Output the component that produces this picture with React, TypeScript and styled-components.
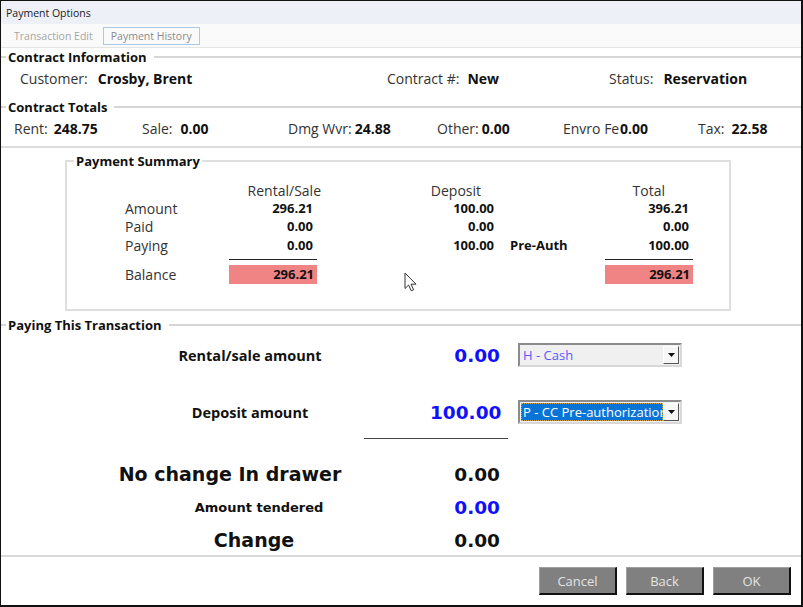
import React from 'react';
import styled, { createGlobalStyle } from 'styled-components';

const GlobalStyle = createGlobalStyle`
  html, body { margin: 0; padding: 0; background: #fff; }
  body { font-family: "Open Sans", "Noto Sans", sans-serif; color: #111; }
  * { box-sizing: border-box; }
`;

const Window = styled.div`
  width: 803px;
  height: 607px;
  border: 1px solid #111;
  border-right-width: 2px;
  border-bottom-width: 2px;
  display: flex;
  flex-direction: column;
  background: #fff;
  overflow: hidden;
`;

const TitleBar = styled.div`
  height: 23px;
  flex: none;
  background: #eef0f7;
  display: flex;
  align-items: center;
  padding-left: 5px;
  font-size: 10.5px;
  color: #222;
`;

const TabBar = styled.div`
  height: 24px;
  flex: none;
  background: #fafafa;
  border-bottom: 1px solid #e4e4e4;
  display: flex;
  align-items: center;
  gap: 2px;
  padding-left: 5px;
`;

const Tab = styled.div<{ $active?: boolean }>`
  height: 18px;
  padding: 0 7px;
  display: flex;
  align-items: center;
  font-size: 10.5px;
  color: ${(p) => (p.$active ? '#8a8a8a' : '#a5a5a5')};
  border: 1px solid ${(p) => (p.$active ? '#a9cbea' : 'transparent')};
`;

const SectionHeader = styled.div<{ $mt?: number }>`
  display: flex;
  align-items: center;
  height: 18px;
  flex: none;
  margin-top: ${(p) => p.$mt ?? 0}px;
  font-weight: 700;
  font-size: 13px;
  color: #111;
  &::before {
    content: '';
    width: 5px;
    height: 2px;
    background: #d6d6d6;
    margin-right: 2px;
  }
  &::after {
    content: '';
    flex: 1;
    height: 2px;
    background: #d6d6d6;
    margin-left: 7px;
  }
`;

const InfoRow = styled.div<{ $cols: string; $pl: number }>`
  display: grid;
  grid-template-columns: ${(p) => p.$cols};
  padding-left: ${(p) => p.$pl}px;
  height: 20px;
  margin-top: 2px;
  align-items: center;
  flex: none;
  font-size: 14px;
`;

const Pair = styled.div<{ $gap: number }>`
  display: flex;
  align-items: baseline;
  gap: ${(p) => p.$gap}px;
  white-space: nowrap;
`;

const Label = styled.span<{ $clip?: number }>`
  color: #333;
  ${(p) => (p.$clip ? `width: ${p.$clip}px; overflow: hidden; display: inline-block;` : '')}
`;

const Value = styled.span`
  font-weight: 700;
  color: #111;
`;

const Divider = styled.div`
  height: 2px;
  flex: none;
  background: #dcdcdc;
  margin-top: 8px;
`;

const GroupBox = styled.fieldset`
  margin: 5px 0 0 64px;
  width: 666px;
  padding: 0;
  min-width: 0;
  border: 2px solid #dfdfdf;
  flex: none;
`;

const GroupLegend = styled.legend`
  margin-left: 7px;
  padding: 0 2px;
  font-weight: 700;
  font-size: 13px;
  line-height: 16px;
  color: #111;
`;

const SummaryGrid = styled.div`
  position: relative;
  display: grid;
  grid-template-columns: 104px 88px 181px 107px 88px;
  grid-template-rows: 18px 18px 18.5px 19px 10px 19px;
  padding: 12px 0 25.5px 58px;
  align-items: center;
`;

const ColHead = styled.div<{ $mr: number }>`
  justify-self: end;
  margin-right: ${(p) => p.$mr}px;
  font-size: 14px;
  color: #333;
  white-space: nowrap;
`;

const RowLabel = styled.div`
  font-size: 14px;
  color: #333;
  line-height: 18px;
  padding-top: 1px;
`;

const Num = styled.div`
  text-align: right;
  padding-right: 4px;
  font-weight: 700;
  font-size: 13px;
  color: #111;
`;

const Note = styled.div`
  padding-left: 12px;
  font-weight: 700;
  font-size: 13px;
  color: #111;
`;

const Rule = styled.div`
  height: 1px;
  background: #222;
`;

const BalanceBox = styled.div`
  height: 19px;
  background: #f08383;
  text-align: right;
  padding-right: 3px;
  font-weight: 700;
  font-size: 13px;
  line-height: 19px;
  color: #111;
`;

const Cursor = styled.svg`
  position: absolute;
  left: 337px;
  top: 103px;
`;

const TxRow = styled.div<{ $h: number; $mt: number }>`
  display: grid;
  grid-template-columns: 324px 70px 164px;
  column-gap: 18px;
  padding-left: 87px;
  height: ${(p) => p.$h}px;
  margin-top: ${(p) => p.$mt}px;
  align-items: center;
  flex: none;
`;

const TxLabel = styled.div<{ $size: 'sm' | 'md' | 'lg'; $shift?: number }>`
  text-align: center;
  white-space: nowrap;
  font-weight: 700;
  color: #111;
  ${(p) =>
    p.$size === 'md'
      ? 'font-family: "Open Sans", sans-serif; font-size: 14.5px;'
      : p.$size === 'sm'
      ? 'font-family: "DejaVu Sans", sans-serif; font-size: 13px;'
      : 'font-family: "DejaVu Sans", sans-serif; font-size: 19px;'}
  ${(p) =>
    p.$shift
      ? p.$shift > 0
        ? `padding-left: ${p.$shift * 2}px;`
        : `padding-right: ${-p.$shift * 2}px;`
      : ''}
`;

const TxValue = styled.div<{ $blue?: boolean }>`
  text-align: right;
  white-space: nowrap;
  font-family: "DejaVu Sans", sans-serif;
  font-weight: 700;
  font-size: 18.5px;
  color: ${(p) => (p.$blue ? '#1010ff' : '#111')};
`;

const TxRule = styled.div`
  height: 1px;
  width: 144px;
  flex: none;
  margin: 14px 0 0 363px;
  background: #444;
`;

const Combo = styled.div`
  width: 164px;
  height: 24px;
  display: flex;
  border: 2px solid;
  border-color: #8c8c8c #d8d8d8 #d8d8d8 #8c8c8c;
  background: #f0f0f0;
  padding: 1px;
`;

const ComboText = styled.div<{ $selected?: boolean }>`
  flex: 1;
  min-width: 0;
  overflow: hidden;
  white-space: nowrap;
  padding-left: 2px;
  font-size: 13px;
  line-height: 18px;
  color: ${(p) => (p.$selected ? '#fff' : '#5a5aff')};
  background: ${(p) => (p.$selected ? '#0a74d6' : 'transparent')};
  outline: ${(p) => (p.$selected ? '1px dotted #d9a040' : 'none')};
  outline-offset: -1px;
`;

const ComboArrow = styled.div`
  width: 16px;
  flex: none;
  display: flex;
  align-items: center;
  justify-content: center;
  background: #f6f6f6;
  border: 1px solid;
  border-color: #fff #555 #555 #fff;
`;

const Footer = styled.div`
  margin-top: auto;
  height: 50px;
  flex: none;
  border-top: 2px solid #d8d8d8;
  display: flex;
  justify-content: flex-end;
  align-items: flex-start;
  gap: 9px;
  padding: 10px 10px 0 0;
`;

const Button = styled.div`
  width: 78px;
  height: 28px;
  background: #808080;
  color: #e4e4e4;
  font-size: 13px;
  display: flex;
  align-items: center;
  justify-content: center;
  border: 1px solid;
  border-color: #a0a0a0 #111 #111 #a0a0a0;
  border-right-width: 2px;
  border-bottom-width: 2px;
`;

const Arrow = () => (
  <svg width="7" height="4" viewBox="0 0 7 4">
    <path d="M0 0 L7 0 L3.5 4 Z" fill="#111" />
  </svg>
);

export default function App() {
  return (
    <>
      <GlobalStyle />
      <Window>
        <TitleBar>Payment Options</TitleBar>
        <TabBar>
          <Tab>Transaction Edit</Tab>
          <Tab $active>Payment History</Tab>
        </TabBar>

        <SectionHeader>Contract Information</SectionHeader>
        <InfoRow $cols="367px 222px 1fr" $pl={19}>
          <Pair $gap={10}>
            <Label>Customer:</Label>
            <Value>Crosby, Brent</Value>
          </Pair>
          <Pair $gap={8}>
            <Label>Contract #:</Label>
            <Value>New</Value>
          </Pair>
          <Pair $gap={10}>
            <Label>Status:</Label>
            <Value>Reservation</Value>
          </Pair>
        </InfoRow>

        <SectionHeader $mt={10}>Contract Totals</SectionHeader>
        <InfoRow $cols="128px 146px 149px 126px 135px 1fr" $pl={13}>
          <Pair $gap={6}>
            <Label>Rent:</Label>
            <Value>248.75</Value>
          </Pair>
          <Pair $gap={8}>
            <Label>Sale:</Label>
            <Value>0.00</Value>
          </Pair>
          <Pair $gap={3}>
            <Label>Dmg Wvr:</Label>
            <Value>24.88</Value>
          </Pair>
          <Pair $gap={3}>
            <Label>Other:</Label>
            <Value>0.00</Value>
          </Pair>
          <Pair $gap={1}>
            <Label $clip={56}>Envro Fee:</Label>
            <Value>0.00</Value>
          </Pair>
          <Pair $gap={7}>
            <Label>Tax:</Label>
            <Value>22.58</Value>
          </Pair>
        </InfoRow>
        <Divider />

        <GroupBox>
          <GroupLegend>Payment Summary</GroupLegend>
          <SummaryGrid>
            <div />
            <ColHead $mr={-4}>Rental/Sale</ColHead>
            <ColHead $mr={17}>Deposit</ColHead>
            <div />
            <ColHead $mr={28}>Total</ColHead>

            <RowLabel>Amount</RowLabel>
            <Num>296.21</Num>
            <Num>100.00</Num>
            <div />
            <Num>396.21</Num>

            <RowLabel>Paid</RowLabel>
            <Num>0.00</Num>
            <Num>0.00</Num>
            <div />
            <Num>0.00</Num>

            <RowLabel>Paying</RowLabel>
            <Num>0.00</Num>
            <Num>100.00</Num>
            <Note>Pre-Auth</Note>
            <Num>100.00</Num>

            <div />
            <Rule />
            <div />
            <div />
            <Rule />

            <RowLabel>Balance</RowLabel>
            <BalanceBox>296.21</BalanceBox>
            <div />
            <div />
            <BalanceBox>296.21</BalanceBox>

            <Cursor width="13" height="20" viewBox="0 0 13 20">
              <path
                d="M1 1 L1 16.5 L4.6 13 L7.2 18.8 L9.6 17.8 L7.1 12.2 L12 12.2 Z"
                fill="#fff"
                stroke="#333"
                strokeWidth="1"
                strokeLinejoin="round"
              />
            </Cursor>
          </SummaryGrid>
        </GroupBox>

        <SectionHeader $mt={5}>Paying This Transaction</SectionHeader>
        <TxRow $h={24} $mt={9}>
          <TxLabel $size="md">Rental/sale amount</TxLabel>
          <TxValue $blue>0.00</TxValue>
          <Combo>
            <ComboText>H - Cash</ComboText>
            <ComboArrow>
              <Arrow />
            </ComboArrow>
          </Combo>
        </TxRow>
        <TxRow $h={24} $mt={33}>
          <TxLabel $size="md">Deposit amount</TxLabel>
          <TxValue $blue>100.00</TxValue>
          <Combo>
            <ComboText $selected>P - CC Pre-authorization</ComboText>
            <ComboArrow>
              <Arrow />
            </ComboArrow>
          </Combo>
        </TxRow>
        <TxRule />
        <TxRow $h={30} $mt={20}>
          <TxLabel $size="lg" $shift={-20}>No change In drawer</TxLabel>
          <TxValue>0.00</TxValue>
        </TxRow>
        <TxRow $h={22} $mt={7}>
          <TxLabel $size="sm" $shift={9}>Amount tendered</TxLabel>
          <TxValue $blue>0.00</TxValue>
        </TxRow>
        <TxRow $h={30} $mt={7}>
          <TxLabel $size="lg" $shift={4}>Change</TxLabel>
          <TxValue>0.00</TxValue>
        </TxRow>

        <Footer>
          <Button>Cancel</Button>
          <Button>Back</Button>
          <Button>OK</Button>
        </Footer>
      </Window>
    </>
  );
}
